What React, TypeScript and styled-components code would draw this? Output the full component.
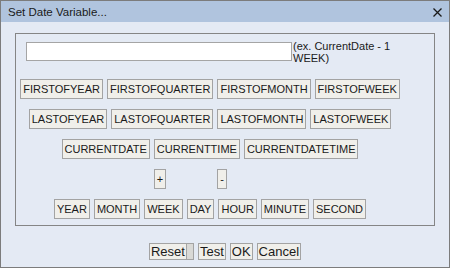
import React from 'react';
import styled, { createGlobalStyle } from 'styled-components';

const GlobalStyle = createGlobalStyle`
  html, body {
    margin: 0;
    padding: 0;
    background: #e4eaf4;
  }
  * { box-sizing: border-box; }
`;

const Dialog = styled.div`
  width: 450px;
  height: 268px;
  border: 1px solid #7c7c7c;
  background: #e4eaf4;
  font-family: "Liberation Sans", Arial, sans-serif;
  color: #1a1a1a;
  display: flex;
  flex-direction: column;
`;

const TitleBar = styled.div`
  height: 21px;
  background: #b0c4de;
  display: flex;
  align-items: center;
  justify-content: space-between;
  padding: 0 7px 0 7px;
`;

const Title = styled.span`
  font-size: 11.5px;
  color: #1a1a1a;
`;

const CloseIcon = styled.svg`
  width: 9px;
  height: 9px;
  margin-top: 1px;
`;

const Fieldset = styled.div`
  margin: 11px 0 0 14px;
  width: 420px;
  height: 193px;
  border: 1px solid #858585;
  padding: 4px 0 0 0;
`;

const InputRow = styled.div`
  display: flex;
  align-items: flex-start;
  padding-left: 10px;
  height: 41px;
`;

const TextInput = styled.input`
  width: 266px;
  height: 19px;
  margin-top: 4px;
  border: 1px solid #a5a5a5;
  background: #fff;
  padding: 0 2px;
  outline: none;
`;

const Hint = styled.span`
  width: 112px;
  font-size: 11px;
  line-height: 12px;
  padding-top: 2px;
  margin-left: 1px;
  color: #1a1a1a;
`;

const ButtonArea = styled.div`
  width: 388px;
  display: flex;
  flex-direction: column;
  gap: 10px;
`;

const Row = styled.div`
  display: flex;
  justify-content: center;
  gap: 4px;
`;

const OpRow = styled.div`
  display: grid;
  grid-template-columns: 62px 62px;
  justify-content: center;
  justify-items: center;
  padding-right: 38px;
`;

const KeyButton = styled.button`
  height: 20px;
  font-family: "Liberation Sans", Arial, sans-serif;
  font-size: 11px;
  line-height: 14px;
  color: #1a1a1a;
  background: #f0efea;
  border: 1px solid #a3a3a3;
  padding: 1px 2px;
  margin: 0;
  border-radius: 0;
`;

const Footer = styled.div`
  margin-top: 17px;
  display: flex;
  justify-content: center;
`;

const FooterButton = styled.button<{ $gap?: number }>`
  height: 17px;
  font-family: "Liberation Sans", Arial, sans-serif;
  font-size: 13px;
  line-height: 14px;
  color: #1a1a1a;
  background: #f0efea;
  border: 1px solid #a3a3a3;
  padding: 0 1px;
  margin: 0 0 0 ${p => p.$gap ?? 4}px;
  border-radius: 0;
`;

const Spacer = styled.button`
  width: 7px;
  height: 17px;
  background: #d9d9d6;
  border: 1px solid #a3a3a3;
  border-left: none;
  padding: 0;
  margin: 0;
  border-radius: 0;
`;

const rows = [
  ['FIRSTOFYEAR', 'FIRSTOFQUARTER', 'FIRSTOFMONTH', 'FIRSTOFWEEK'],
  ['LASTOFYEAR', 'LASTOFQUARTER', 'LASTOFMONTH', 'LASTOFWEEK'],
  ['CURRENTDATE', 'CURRENTTIME', 'CURRENTDATETIME'],
];

const units = ['YEAR', 'MONTH', 'WEEK', 'DAY', 'HOUR', 'MINUTE', 'SECOND'];

export default function App() {
  return (
    <>
      <GlobalStyle />
      <Dialog>
        <TitleBar>
          <Title>Set Date Variable...</Title>
          <CloseIcon viewBox="0 0 9 9">
            <path d="M0.5 0.5 L8.5 8.5 M8.5 0.5 L0.5 8.5" stroke="#1a1a1a" strokeWidth="1.3" />
          </CloseIcon>
        </TitleBar>
        <Fieldset>
          <InputRow>
            <TextInput type="text" />
            <Hint>(ex. CurrentDate - 1 WEEK)</Hint>
          </InputRow>
          <ButtonArea>
            {rows.map((r, i) => (
              <Row key={i}>
                {r.map(l => (
                  <KeyButton key={l}>{l}</KeyButton>
                ))}
              </Row>
            ))}
            <OpRow>
              <KeyButton>+</KeyButton>
              <KeyButton>-</KeyButton>
            </OpRow>
            <Row>
              {units.map(u => (
                <KeyButton key={u}>{u}</KeyButton>
              ))}
            </Row>
          </ButtonArea>
        </Fieldset>
        <Footer>
          <FooterButton $gap={0}>Reset</FooterButton>
          <Spacer />
          <FooterButton>Test</FooterButton>
          <FooterButton>OK</FooterButton>
          <FooterButton>Cancel</FooterButton>
        </Footer>
      </Dialog>
    </>
  );
}
